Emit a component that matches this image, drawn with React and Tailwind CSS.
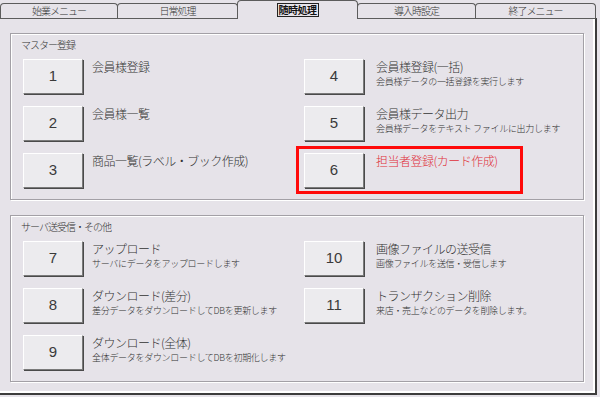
import React from 'react';

const tabs = [
  { label: '始業メニュー', w: 'w-[118px]' },
  { label: '日常処理', w: 'w-[121px]' },
  { label: '随時処理', w: 'w-[121px]', active: true },
  { label: '導入時設定', w: 'w-[119px]' },
  { label: '終了メニュー', w: 'w-[121px]' },
];

const master = [
  [
    { no: '1', title: '会員様登録' },
    { no: '2', title: '会員様一覧' },
    { no: '3', title: '商品一覧(ラベル・ブック作成)' },
  ],
  [
    { no: '4', title: '会員様登録(一括)', sub: '会員様データの一括登録を実行します' },
    { no: '5', title: '会員様データ出力', sub: '会員様データをテキスト ファイルに出力します' },
    { no: '6', title: '担当者登録(カード作成)', red: true },
  ],
];

const server = [
  [
    { no: '7', title: 'アップロード', sub: 'サーバにデータをアップロードします' },
    { no: '8', title: 'ダウンロード(差分)', sub: '差分データをダウンロードしてDBを更新します' },
    { no: '9', title: 'ダウンロード(全体)', sub: '全体データをダウンロードしてDBを初期化します' },
  ],
  [
    { no: '10', title: '画像ファイルの送受信', sub: '画像ファイルを送信・受信します' },
    { no: '11', title: 'トランザクション削除', sub: '来店・売上などのデータを削除します。' },
  ],
];

const Tab = ({ label, w, active }) => {
  if (active) {
    return (
      <div className={`${w} h-[19px] -ml-px -mb-px relative z-10 bg-[#e6e3e9] border-t border-x border-[#5c5c5c] rounded-t-[4px] flex items-center justify-center`}>
        <span className="text-[10px] leading-[10px] font-bold tracking-[-0.5px] text-[#111] border border-[#222] px-[1px] py-[1px]">{label}</span>
      </div>
    );
  }
  return (
    <div className={`${w} h-[15px] -ml-px first:ml-0 bg-[#e6e3e9] border-t border-x border-[#5c5c5c] rounded-t-[4px] flex items-center justify-center`}>
      <span className="text-[10px] leading-[12px] font-light tracking-[-1px] text-[#333]">{label}</span>
    </div>
  );
};

const Item = ({ no, title, sub, red, right }) => (
  <div className="relative flex items-start h-[35px]">
    {red && (
      <div className="absolute -left-[8px] -top-[7px] w-[227px] h-[48px] border-[3px] border-[#ff0a0a]" />
    )}
    <div className="w-[60px] h-[35px] shrink-0 bg-[#ecebee] border border-t-white border-l-white border-r-[#7a7a7a] border-b-[#7a7a7a] shadow-[1px_1px_0_#4a4a4a] flex items-center justify-center">
      <span className="text-[15px] text-[#3a3a3a]" style={{ fontFamily: '"Liberation Sans", Arial, sans-serif' }}>{no}</span>
    </div>
    <div className={`${right ? 'ml-[12px]' : 'ml-[9px]'}`}>
      <div className={`text-[12px] leading-[16px] font-light tracking-[-0.5px] ${red ? 'text-[#e0303a]' : 'text-[#333]'}`}>{title}</div>
      {sub && <div className="text-[9px] leading-[13px] font-light tracking-[-0.3px] text-[#333]">{sub}</div>}
    </div>
  </div>
);

const Group = ({ title, cols }) => (
  <div className="w-[574px] h-[167px] border border-[#a3a0a6] shadow-[inset_1px_1px_0_#fff,1px_1px_0_#fff] flex flex-col">
    <div className="pl-[10px] pt-[4px] text-[10px] leading-[14px] font-light tracking-[-1px] text-[#333]">{title}</div>
    <div className="mt-[7px] pl-[12px] grid grid-cols-[281px_1fr]">
      {cols.map((col, ci) => (
        <div key={ci} className="flex flex-col gap-[12px]">
          {col.map((it) => (
            <Item key={it.no} {...it} right={ci === 1} />
          ))}
        </div>
      ))}
    </div>
  </div>
);

export default function App() {
  return (
    <div
      className="w-[600px] h-[397px] bg-[#e6e3e9] overflow-hidden flex flex-col"
      style={{ fontFamily: '"Noto Sans CJK JP", "Noto Sans", sans-serif' }}
    >
      <div className="h-[18px] flex items-end">
        {tabs.map((t) => (
          <Tab key={t.label} {...t} />
        ))}
      </div>
      <div className="w-[597px] h-[377px] border-t border-[#5c5c5c] border-r-2 border-b-2 border-r-[#3c3c3c] border-b-[#3c3c3c] shadow-[inset_-2px_-2px_0_#fff] pl-[10px] pt-[14px] flex flex-col">
        <Group title="マスター登録" cols={master} />
        <div className="mt-[15px]">
          <Group title="サーバ送受信・その他" cols={server} />
        </div>
      </div>
    </div>
  );
}
